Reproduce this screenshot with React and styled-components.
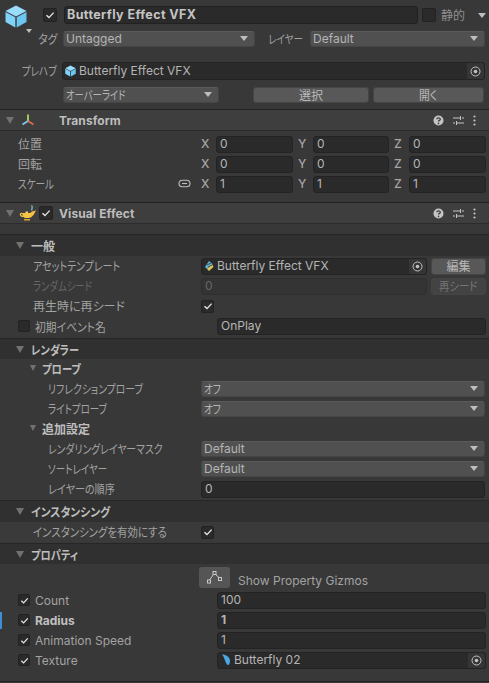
import React from 'react';
import styled, { createGlobalStyle } from 'styled-components';

const Global = createGlobalStyle`
  html, body { margin: 0; padding: 0; background: #383838; }
  body { font-family: Inter, "Noto Sans CJK JP", sans-serif; font-size: 12px; color: #a9a9a9; overflow: hidden; font-feature-settings: "palt"; }
`;
const Page = styled.div`width: 489px; height: 683px; overflow: hidden; background: #383838; position: relative;`;

/* Katakana in the reference is set in a much narrower face than the installed CJK one. */
const Narrow = styled.span`
  display: inline-block; white-space: nowrap; transform: scaleX(${p => p.$x}); transform-origin: ${p => p.$o || 'left'} center;
`;

const Top = styled.div`height: 109px; border-bottom: 1px solid #222; display: flex; flex-direction: column; box-sizing: content-box;`;
const TopRow = styled.div`display: flex; align-items: center; height: ${p => p.$h}px; margin-top: ${p => p.$mt || 0}px;`;
const CubeBox = styled.div`width: 43px; height: 29px; flex: none; display: flex; align-items: flex-start; padding: 4px 0 0 5px; box-sizing: border-box; position: relative;`;
const Caret = styled.span`
  width: 0; height: 0; border-left: 4px solid transparent; border-right: 4px solid transparent;
  border-top: 5px solid #bdbdbd; flex: none; display: block;
`;
const CubeCaret = styled(Caret)`position: absolute; left: 26px; top: 28px; border-left-width: 3.5px; border-right-width: 3.5px; border-top-width: 4px;`;
const StaticCaret = styled(Caret)`margin-left: 13px;`;
const Check = styled.span`
  width: ${p => p.$s || 13}px; height: ${p => p.$s || 13}px; flex: none; background: #2a2a2a; border: 1px solid #222;
  border-radius: 2px; display: flex; align-items: center; justify-content: center; box-sizing: border-box;
  margin-left: ${p => p.$ml || 0}px;
`;
const NameField = styled.div`
  width: 354px; height: 18px; margin-left: 7px; flex: none; background: #2a2a2a; border: 1px solid #212121; border-radius: 3px; box-sizing: border-box;
  color: #c4c4c4; font-weight: 700; font-size: 12.5px; padding-left: 2px; line-height: 15px; letter-spacing: .4px; white-space: nowrap;
`;
const Faint = styled.span`color: #8f8f8f; margin-left: 5px; white-space: nowrap; padding-bottom: 2px;`;
const TopLabel = styled.span`width: ${p => p.$w}px; flex: none; text-align: right; padding: 0 ${p => p.$pr || 0}px 2px 0; box-sizing: border-box; color: #a0a0a0; white-space: nowrap;`;
const Select = styled.div`
  width: ${p => p.$w}px; flex: none; height: 16px; background: #505050; border: 1px solid #454545; border-top-color: #5a5a5a; border-radius: 3px;
  box-sizing: border-box; display: flex; align-items: center; justify-content: space-between; padding: 0 6px 2px 2px; color: #b4b4b4; margin-left: ${p => p.$ml || 0}px; white-space: nowrap;
`;
const ObjField = styled.div`
  width: ${p => p.$w}px; flex: none; height: ${p => p.$h || 17}px; background: #2a2a2a; border: 1px solid #232323; border-radius: 3px; box-sizing: border-box;
  display: flex; align-items: center; padding: 0 0 1px 2px; color: #b4b4b4; white-space: nowrap; gap: 3px; position: relative;
`;
const Picker = styled.span`
  position: absolute; right: 0; top: 0; bottom: 0; width: 17px; background: #353535; display: flex; align-items: center; justify-content: center; border-radius: 0 3px 3px 0;
`;
const Btn = styled.div`
  width: ${p => p.$w}px; flex: none; height: ${p => p.$h || 16}px; margin-left: ${p => p.$ml || 0}px; background: ${p => p.$dim ? '#434343' : '#585858'}; border: 1px solid #454545; border-radius: 3px; box-sizing: border-box;
  display: flex; align-items: center; justify-content: center; padding-bottom: 1px; color: ${p => p.$dim ? '#757575' : '#b8b8b8'};
`;

const CompHeader = styled.div`
  height: 20px; background: #3e3e3e; display: flex; align-items: center; padding-left: 6px; border-bottom: 1px solid #2c2c2c; box-sizing: content-box;
  border-top: ${p => p.$line ? '1px solid #222' : 'none'};
`;
const Tri = styled.span`
  width: 0; height: 0; border-left: 4px solid transparent; border-right: 4px solid transparent; border-top: 7px solid #717171; flex: none; display: block;
`;
const CompTitle = styled.span`font-weight: 700; color: #bdbdbd; letter-spacing: .1px; margin-left: ${p => p.$ml}px; padding-top: 1px;`;
const Tools = styled.div`margin-left: auto; display: flex; align-items: center; width: 56px; gap: 9px;`;
const Row = styled.div`
  height: 20px; display: flex; align-items: center; position: relative; background: ${p => p.$bg || 'transparent'};
`;
const Label = styled.span`
  width: ${p => p.$w || 200}px; flex: none; box-sizing: border-box; padding: 0 0 2px ${p => p.$pl}px; color: ${p => p.$dim ? '#666' : '#a3a3a3'};
  white-space: nowrap;
`;
const Axis = styled.div`display: flex; align-items: center; width: ${p => p.$w}px; flex: none; margin-right: 5px;`;
const AxisLetter = styled.span`width: 15px; flex: none; color: #a6a6a6; font-weight: 500; padding-bottom: 1px;`;
const Num = styled.div`
  flex: ${p => p.$w ? 'none' : 1}; width: ${p => p.$w ? p.$w + 'px' : 'auto'}; height: 17px; background: ${p => p.$dim ? '#343434' : '#2a2a2a'}; border: 1px solid ${p => p.$dim ? '#2e2e2e' : '#232323'}; border-radius: 3px; box-sizing: border-box; color: ${p => p.$dim ? '#666' : '#b6b6b6'}; padding-left: 3px; line-height: 14px;
  font-weight: ${p => p.$bold ? 700 : 400};
`;
const LinkIcon = styled.span`position: absolute; left: 178px; top: 5px; display: flex;`;
const SecHead = styled.div`
  height: ${p => p.$h || 21}px; display: flex; align-items: center; background: #303030; padding-left: 16px; gap: 7px; box-sizing: border-box; border-top: 1px solid #262626;
  font-weight: 700; color: #bebebe;
`;
const SubHead = styled.div`
  height: 20px; display: flex; align-items: center; padding: 0 0 2px 30px; box-sizing: border-box; gap: 6px; font-weight: 700; color: #bebebe;
`;
const SmallTri = styled(Tri)`border-left-width: 3.5px; border-right-width: 3.5px; border-top-width: 6px;`;
const Spacer = styled.div`height: ${p => p.$h}px;`;
const CheckLabel = styled.span`display: flex; align-items: center; padding-left: 18px; width: 217px; flex: none; box-sizing: border-box; gap: 5px; color: ${p => p.$bold ? '#c0c0c0' : '#a3a3a3'}; font-weight: ${p => p.$bold ? 700 : 400}; white-space: nowrap;`;
const Selected = styled.span`position: absolute; left: 0; top: 2px; width: 2px; height: 17px; background: #3d8fd1;`;
const GizmoRow = styled.div`height: 26px; display: flex; align-items: flex-start; padding: 3px 0 0 199px; box-sizing: border-box; gap: 8px;`;
const GizmoBtn = styled.div`width: 31px; height: 21px; background: #555; border-radius: 3px; display: flex; align-items: center; justify-content: center;`;
const GizmoText = styled.span`color: #a3a3a3; margin-top: 6px; white-space: nowrap;`;
const EndLine = styled.div`height: 1px; background: #222; margin-top: 11px;`;

const Tick = ({ c = '#e6e6e6', s = 10 }) => (
  <svg width={s} height={s} viewBox="0 0 10 10"><path d="M1.5 5.2 L4 7.6 L8.6 2.6" fill="none" stroke={c} strokeWidth="1.4" /></svg>
);
const Cube = ({ s = 22 }) => (
  <svg width={s} height={s + 1} viewBox="0 0 22 23" style={{ flex: 'none' }}>
    <path d="M11 0.5 L21.5 6 L11 11.5 L0.5 6Z" fill="#9adcfb" />
    <path d="M0.5 7 L10.3 12.3 L10.3 22.5 L0.5 17Z" fill="#7fd2f8" />
    <path d="M21.5 7 L11.7 12.3 L11.7 22.5 L21.5 17Z" fill="#6cc6f2" />
  </svg>
);
const Target = () => (
  <svg width="11" height="11" viewBox="0 0 11 11"><circle cx="5.5" cy="5.5" r="4.5" fill="none" stroke="#c2c2c2" strokeWidth="1" /><circle cx="5.5" cy="5.5" r="1.8" fill="#c2c2c2" /></svg>
);
const Vfx = () => (
  <svg width="10" height="12" viewBox="0 0 10 12" style={{ flex: 'none' }}><path d="M5 1 L8.5 4 L3 9 L1 7Z" fill="#5fb6d8" /><path d="M8 4 L9.5 7 L5 11 L3 9Z" fill="#d9c25a" /><path d="M3 5 L7 3 M4 7 L8 5" stroke="#333" strokeWidth=".8" /></svg>
);
const Help = () => (
  <svg width="11" height="11" viewBox="0 0 11 11">
    <circle cx="5.5" cy="5.5" r="5" fill="#c4c4c4" />
    <path d="M3.8 4.3 C3.8 2.4 7.3 2.4 7.3 4.2 C7.3 5.4 5.5 5.3 5.5 6.6" fill="none" stroke="#3e3e3e" strokeWidth="1.3" />
    <circle cx="5.5" cy="8.4" r=".8" fill="#3e3e3e" />
  </svg>
);
const Sliders = () => (
  <svg width="11" height="11" viewBox="0 0 11 11" fill="none" stroke="#c4c4c4" strokeWidth="1">
    <path d="M0 3 H7 M9 3 H11 M7.5 1 V5 M0 8 H2 M4 8 H11 M3.5 6 V10" />
  </svg>
);
const Dots = () => (
  <svg width="3" height="11" viewBox="0 0 3 11"><circle cx="1.5" cy="1.5" r="1.1" fill="#c4c4c4" /><circle cx="1.5" cy="5.5" r="1.1" fill="#c4c4c4" /><circle cx="1.5" cy="9.5" r="1.1" fill="#c4c4c4" /></svg>
);
const ToolIcons = () => (
  <Tools><Help /><Sliders /><Dots /></Tools>
);
const TransformIcon = () => (
  <svg width="14" height="14" viewBox="0 0 14 14" fill="none" strokeWidth="1.8" style={{ marginLeft: 7, flex: 'none' }}>
    <path d="M7 8 V1.5" stroke="#a5d86a" />
    <path d="M7 8 L1.5 11.5" stroke="#7cc8f0" />
    <path d="M7 8 L12.5 11.5" stroke="#e0694d" />
  </svg>
);
const Lamp = () => (
  <svg width="18" height="16" viewBox="0 0 18 16" style={{ marginLeft: 5, flex: 'none' }}>
    <path d="M12.5 0.5 C14.5 2 12 3.5 13 5.5" fill="none" stroke="#86c7e6" strokeWidth="1.2" />
    <path d="M3 8 H10 C11 8 12 7.5 13 6.5 L17 5.5 C15 9 14 12 10 13 H6 C4 12.5 3.5 10.5 3 8Z" fill="#f5c344" />
    <path d="M3.5 8.5 C0.5 7.5 0.5 11.5 4.5 11.5" fill="none" stroke="#f5c344" strokeWidth="1.2" />
    <path d="M5 14 H11 V15.5 H5Z" fill="#dca22c" />
    <path d="M6.5 6.5 H9 V8 H6.5Z" fill="#f7d56f" />
  </svg>
);
const Link = () => (
  <svg width="13" height="9" viewBox="0 0 13 9" fill="none" stroke="#bdbdbd" strokeWidth="1.1">
    <rect x="1" y="1.2" width="11" height="6.6" rx="3.3" /><path d="M4 4.5 H9" />
  </svg>
);
const Gizmo = () => (
  <svg width="15" height="13" viewBox="0 0 15 13" fill="none" stroke="#c9c9c9" strokeWidth="1">
    <rect x=".5" y="9" width="3" height="3" /><rect x="6" y=".5" width="3" height="3" /><rect x="11.5" y="6.5" width="3" height="3" />
    <path d="M2.5 9 L6.5 3.5 M8.5 3.5 L12 6.5" />
  </svg>
);
const Wing = () => (
  <svg width="11" height="14" viewBox="0 0 11 14" style={{ flex: 'none' }}>
    <path d="M2 1.5 C6 1.5 10 4 10 8 C10 11 8.5 12.5 7.5 12 C5 9.5 5 5 2 1.5Z" fill="#49a7e3" />
  </svg>
);

const VecRow = ({ label, x, y, z, link }) => (
  <Row>
    <Label $w={201} $pl={18}>{label}</Label>
    {link && <LinkIcon><Link /></LinkIcon>}
    <Axis $w={92}><AxisLetter>X</AxisLetter><Num>{x}</Num></Axis>
    <Axis $w={91}><AxisLetter>Y</AxisLetter><Num>{y}</Num></Axis>
    <Axis $w={92}><AxisLetter>Z</AxisLetter><Num>{z}</Num></Axis>
  </Row>
);
const PropRow = ({ label, value }) => (
  <Row>
    <Label $pl={48} $w={201}>{label}</Label>
    <Select $w={284}>{value}<Caret /></Select>
  </Row>
);

export default function App() {
  return (
    <Page>
      <Global />
      <Top>
        <TopRow $h={24} $mt={3}>
          <CubeBox><Cube /><CubeCaret /></CubeBox>
          <Check $s={14}><Tick /></Check>
          <NameField>Butterfly Effect VFX</NameField>
          <Check $s={14} $ml={4} />
          <Faint>静的</Faint>
          <StaticCaret />
        </TopRow>
        <TopRow $h={16} $mt={4}>
          <TopLabel $w={63} $pr={6}><Narrow $x={0.9} $o="right">タグ</Narrow></TopLabel>
          <Select $w={192}>Untagged<Caret /></Select>
          <TopLabel $w={55} $pr={7}><Narrow $x={0.79} $o="right">レイヤー</Narrow></TopLabel>
          <Select $w={175}>Default<Caret /></Select>
        </TopRow>
        <TopRow $h={18} $mt={15}>
          <TopLabel $w={62} $pr={5}><Narrow $x={0.8} $o="right">プレハブ</Narrow></TopLabel>
          <ObjField $w={423} $h={18}><Cube s={11} />Butterfly Effect VFX<Picker><Target /></Picker></ObjField>
        </TopRow>
        <TopRow $h={16} $mt={7}>
          <Select $w={156} $ml={63}><Narrow $x={0.78}>オーバーライド</Narrow><Caret /></Select>
          <Btn $w={116} $ml={34}>選択</Btn>
          <Btn $w={111} $ml={4}><Narrow $x={0.9} $o="center">開く</Narrow></Btn>
        </TopRow>
      </Top>
      <CompHeader>
        <Tri />
        <TransformIcon />
        <CompTitle $ml={24}>Transform</CompTitle>
        <ToolIcons />
      </CompHeader>
      <Spacer $h={3} />
      <VecRow label="位置" x="0" y="0" z="0" />
      <VecRow label="回転" x="0" y="0" z="0" />
      <VecRow label={<Narrow $x={0.8}>スケール</Narrow>} x="1" y="1" z="1" link />
      <Spacer $h={8} />
      <CompHeader $line>
        <Tri />
        <Lamp />
        <Check $s={14} $ml={2}><Tick /></Check>
        <CompTitle $ml={6}>Visual Effect</CompTitle>
        <ToolIcons />
      </CompHeader>
      <Spacer $h={10} />
      <SecHead $h={22}><Tri />一般</SecHead>
      <Row>
        <Label $pl={33} $w={201}><Narrow $x={0.83}>アセットテンプレート</Narrow></Label>
        <ObjField $w={226}><Vfx />Butterfly Effect VFX<Picker><Target /></Picker></ObjField>
        <Btn $w={55} $ml={4} $h={17}>編集</Btn>
      </Row>
      <Row>
        <Label $pl={33} $w={201} $dim><Narrow $x={0.78}>ランダムシード</Narrow></Label>
        <Num $dim $w={226}>0</Num>
        <Btn $w={55} $ml={4} $h={17} $dim><Narrow $x={0.86} $o="center">再シード</Narrow></Btn>
      </Row>
      <Row>
        <Label $pl={33} $w={201}>再生時に再シード</Label>
        <Check $s={13}><Tick /></Check>
      </Row>
      <Row>
        <CheckLabel><Check $s={12} /><Narrow $x={0.9}>初期イベント名</Narrow></CheckLabel>
        <Num $w={269}>OnPlay</Num>
      </Row>
      <Spacer $h={2} />
      <SecHead $h={21}><Tri /><Narrow $x={0.85}>レンダラー</Narrow></SecHead>
      <SubHead><SmallTri /><Narrow $x={0.86}>プローブ</Narrow></SubHead>
      <PropRow label={<Narrow $x={0.82}>リフレクションプローブ</Narrow>} value={<Narrow $x={0.8}>オフ</Narrow>} />
      <PropRow label={<Narrow $x={0.79}>ライトプローブ</Narrow>} value={<Narrow $x={0.8}>オフ</Narrow>} />
      <SubHead><SmallTri />追加設定</SubHead>
      <PropRow label={<Narrow $x={0.82}>レンダリングレイヤーマスク</Narrow>} value="Default" />
      <PropRow label={<Narrow $x={0.79}>ソートレイヤー</Narrow>} value="Default" />
      <Row>
        <Label $pl={48} $w={201}><Narrow $x={0.84}>レイヤーの順序</Narrow></Label>
        <Num $w={284}>0</Num>
      </Row>
      <Spacer $h={1} />
      <SecHead $h={22}><Tri /><Narrow $x={0.9}>インスタンシング</Narrow></SecHead>
      <Row $bg="#3a3a3a">
        <Label $pl={33} $w={201}><Narrow $x={0.87}>インスタンシングを有効にする</Narrow></Label>
        <Check $s={13}><Tick /></Check>
      </Row>
      <Spacer $h={1} />
      <SecHead $h={21}><Tri /><Narrow $x={0.85}>プロパティ</Narrow></SecHead>
      <GizmoRow><GizmoBtn><Gizmo /></GizmoBtn><GizmoText>Show Property Gizmos</GizmoText></GizmoRow>
      <Row>
        <CheckLabel><Check $s={12}><Tick s={9} /></Check>Count</CheckLabel>
        <Num $w={269}>100</Num>
      </Row>
      <Row>
        <Selected />
        <CheckLabel $bold><Check $s={12}><Tick s={9} /></Check>Radius</CheckLabel>
        <Num $w={269} $bold>1</Num>
      </Row>
      <Row>
        <CheckLabel><Check $s={12}><Tick s={9} /></Check>Animation Speed</CheckLabel>
        <Num $w={269}>1</Num>
      </Row>
      <Row>
        <CheckLabel><Check $s={12}><Tick s={9} /></Check>Texture</CheckLabel>
        <ObjField $w={269}><Wing />Butterfly 02<Picker><Target /></Picker></ObjField>
      </Row>
      <EndLine />
    </Page>
  );
}
